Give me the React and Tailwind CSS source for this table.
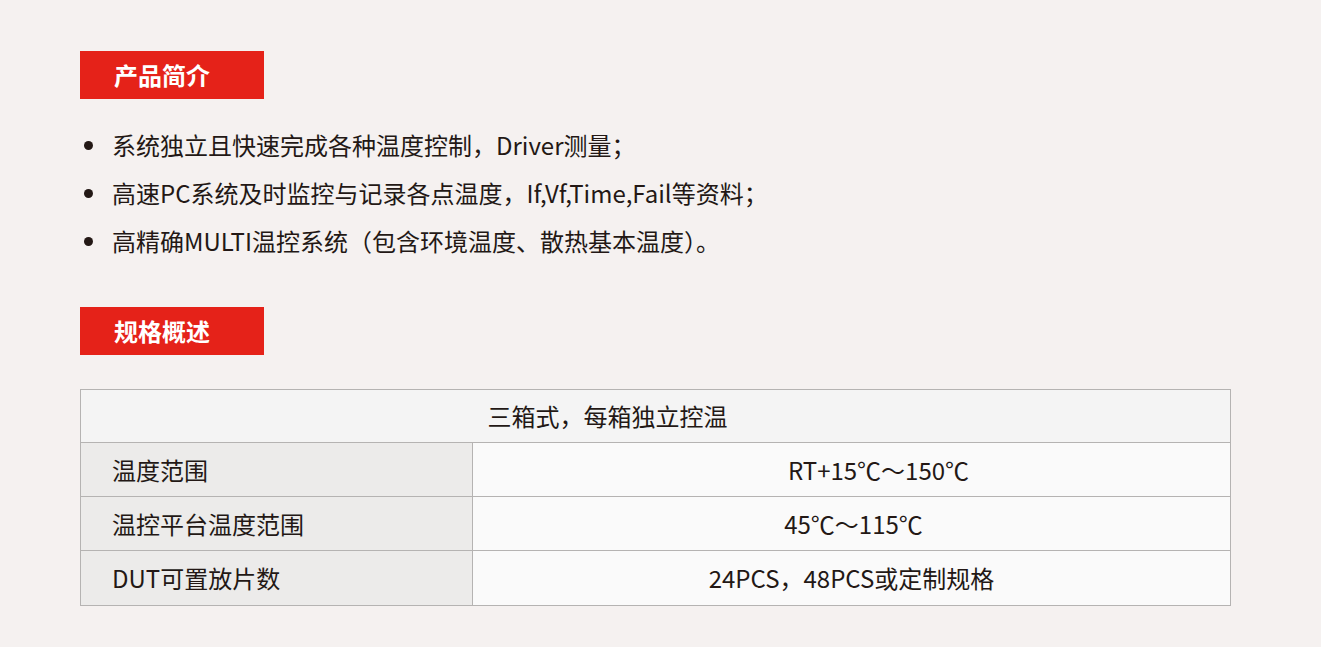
import React from 'react';

const font = { fontFamily: '"Noto Sans CJK SC", "Noto Sans", sans-serif' };

const features = [
    '系统独立且快速完成各种温度控制，Driver测量；',
    '高速PC系统及时监控与记录各点温度，If,Vf,Time,Fail等资料；',
    '高精确MULTI温控系统（包含环境温度、散热基本温度）。',
];

const specs = [
    { k: '温度范围', v: 'RT+15℃～150℃', shift: 'pl-[54px]' },
    { k: '温控平台温度范围', v: '45℃～115℃', shift: 'pl-[4px]' },
    { k: 'DUT可置放片数', v: '24PCS，48PCS或定制规格', shift: '' },
];

function Label({ children }) {
    return (
        <div className="h-12 w-[184px] bg-[#e52219] flex items-center pl-[34px] text-white text-[24px] font-bold">
            {children}
        </div>
    );
}

export default function App() {
    return (
        <div className="min-h-[647px] w-full bg-[#f5f1f0] pt-[51px] pl-20 text-[#231815]" style={font}>
            <Label>产品简介</Label>

            <ul className="mt-[22px]">
                {features.map((item) => (
                    <li key={item} className="flex items-center h-12 text-[24px]">
                        <span className="w-[9px] h-[9px] rounded-full bg-[#231815] ml-1 mr-[19px]" />
                        <span>{item}</span>
                    </li>
                ))}
            </ul>

            <div className="mt-[42px]">
                <Label>规格概述</Label>
            </div>

            <div className="mt-[34px] w-[1151px] border border-[#b5b3b2] text-[24px]">
                <div className="h-[53px] bg-[#f4f4f4] flex items-center justify-center pr-[96px] border-b border-[#b5b3b2]">
                    三箱式，每箱独立控温
                </div>
                {specs.map((row, i) => (
                    <div
                        key={row.k}
                        className={`flex h-[54px] ${i < specs.length - 1 ? 'border-b border-[#b5b3b2]' : ''}`}
                    >
                        <div className="w-[392px] bg-[#ecebea] border-r border-[#b5b3b2] flex items-center pl-[31px]">
                            {row.k}
                        </div>
                        <div className={`flex-1 bg-[#fafafa] flex items-center justify-center ${row.shift}`}>
                            {row.v}
                        </div>
                    </div>
                ))}
            </div>
        </div>
    );
}
